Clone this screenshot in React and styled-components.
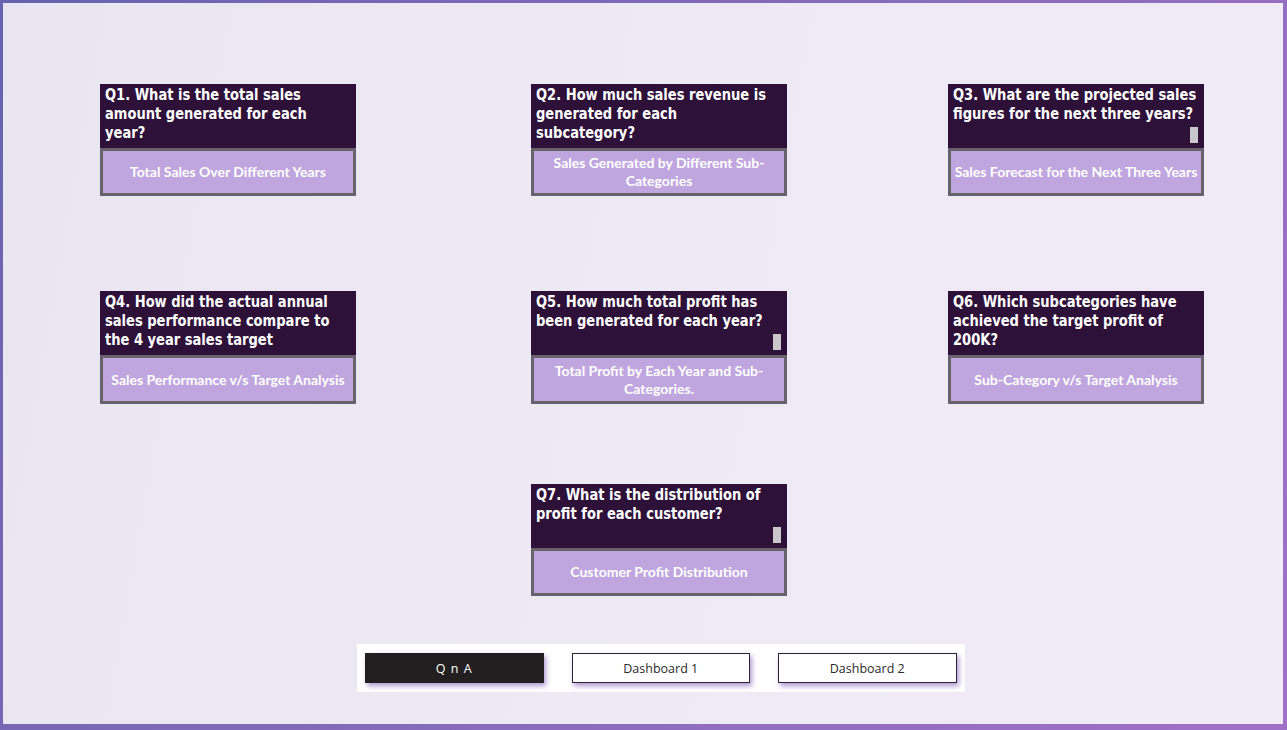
import React from "react";
import styled, { createGlobalStyle } from "styled-components";

const Global = createGlobalStyle`
  html, body { margin: 0; padding: 0; }
  body { font-family: "Liberation Sans", Arial, sans-serif; background: #ece9f4; }
`;

const Frame = styled.div`
  box-sizing: border-box;
  width: 1287px;
  height: 730px;
  border-style: solid;
  border-width: 3px 4px 6px 3px;
  border-image: linear-gradient(120deg, #6763ae 0%, #8a6cbc 55%, #a070c6 100%) 1;
  background: linear-gradient(100deg, #e9e6f2 0%, #edeaf5 50%, #f1eaf7 100%);
  padding: 81px 0 0 97px;
  display: flex;
  flex-direction: column;
  overflow: hidden;
`;

const Row = styled.div`
  display: grid;
  grid-template-columns: 256px 175px 256px 161px 256px;
  margin-top: ${(p) => p.$top || 0}px;
`;

const Card = styled.div`
  grid-column: ${(p) => p.$col};
  display: flex;
  flex-direction: column;
  width: 256px;
`;

const Header = styled.div`
  position: relative;
  box-sizing: border-box;
  height: 64px;
  background: #2e1139;
  padding: 1px 5px 0 5px;
  overflow: hidden;
`;

const HeaderText = styled.div`
  width: 290px;
  transform: scaleX(0.88);
  transform-origin: left top;
  color: #ffffff;
  font-family: "DejaVu Sans Condensed", "DejaVu Sans", sans-serif;
  font-stretch: condensed;
  font-weight: 700;
  font-size: 16.5px;
  line-height: 19px;
  white-space: nowrap;
`;

const Thumb = styled.span`
  position: absolute;
  right: 6px;
  bottom: 5px;
  width: 8px;
  height: 16px;
  background: #c9c7cb;
`;

const ActionButton = styled.div`
  box-sizing: border-box;
  height: ${(p) => p.$h || 48}px;
  border: 3px solid #68626d;
  background: #bfa6df;
  color: #ffffff;
  font-family: Lato, "Open Sans", sans-serif;
  font-weight: 700;
  font-size: 14px;
  line-height: 18px;
  display: flex;
  align-items: center;
  justify-content: center;
  text-align: center;
  white-space: nowrap;
  padding: 0 2px;
`;

const NavRow = styled.div`
  margin-top: 48px;
  margin-left: 257px;
  display: flex;
`;

const NavBox = styled.div`
  background: #ffffff;
  padding: 9px 8px;
  display: flex;
  gap: 28px;
`;

const NavButton = styled.div`
  box-sizing: border-box;
  width: 178.5px;
  height: 30px;
  display: flex;
  align-items: center;
  justify-content: center;
  font-family: "Open Sans", "Noto Sans", sans-serif;
  font-size: 12.5px;
  letter-spacing: ${(p) => (p.$active ? "1px" : "0")};
  background: ${(p) => (p.$active ? "#231f20" : "#ffffff")};
  color: ${(p) => (p.$active ? "#ffffff" : "#2a2a2a")};
  border: 1px solid ${(p) => (p.$active ? "#231f20" : "#2d2237")};
  box-shadow: 2px 3px 5px rgba(110, 70, 170, 0.55);
`;

const rows = [
  {
    top: 0,
    h: 48,
    cards: [
      { col: 1, q: ["Q1. What is the total sales", "amount generated for each", "year?"], b: ["Total Sales Over Different Years"] },
      { col: 3, q: ["Q2. How much sales revenue is", "generated for each", "subcategory?"], b: ["Sales Generated by Different Sub-", "Categories"] },
      { col: 5, q: ["Q3. What are the projected sales", "figures for the next three years?"], b: ["Sales Forecast for the Next Three Years"], scroll: true },
    ],
  },
  {
    top: 95,
    h: 49,
    cards: [
      { col: 1, q: ["Q4. How did the actual annual", "sales performance compare to", "the 4 year sales target"], b: ["Sales Performance v/s Target Analysis"] },
      { col: 3, q: ["Q5. How much total profit has", "been generated for each year?"], b: ["Total Profit by Each Year and Sub-", "Categories."], scroll: true },
      { col: 5, q: ["Q6. Which subcategories have", "achieved the target profit of", "200K?"], b: ["Sub-Category v/s Target Analysis"] },
    ],
  },
  {
    top: 80,
    h: 48,
    cards: [
      { col: 3, q: ["Q7. What is the distribution of", "profit for each customer?"], b: ["Customer Profit Distribution"], scroll: true },
    ],
  },
];

const Lines = ({ lines }) =>
  lines.map((line, j) => (
    <React.Fragment key={j}>
      {j > 0 && <br />}
      {line}
    </React.Fragment>
  ));

export default function App() {
  return (
    <>
      <Global />
      <Frame>
        {rows.map((r, i) => (
          <Row key={i} $top={r.top}>
            {r.cards.map((c) => (
              <Card key={c.q[0]} $col={c.col}>
                <Header>
                  <HeaderText>
                    <Lines lines={c.q} />
                  </HeaderText>
                  {c.scroll && <Thumb />}
                </Header>
                <ActionButton $h={r.h}>
                  <span>
                    <Lines lines={c.b} />
                  </span>
                </ActionButton>
              </Card>
            ))}
          </Row>
        ))}
        <NavRow>
          <NavBox>
            <NavButton $active>Q n A</NavButton>
            <NavButton>Dashboard 1</NavButton>
            <NavButton>Dashboard 2</NavButton>
          </NavBox>
        </NavRow>
      </Frame>
    </>
  );
}
